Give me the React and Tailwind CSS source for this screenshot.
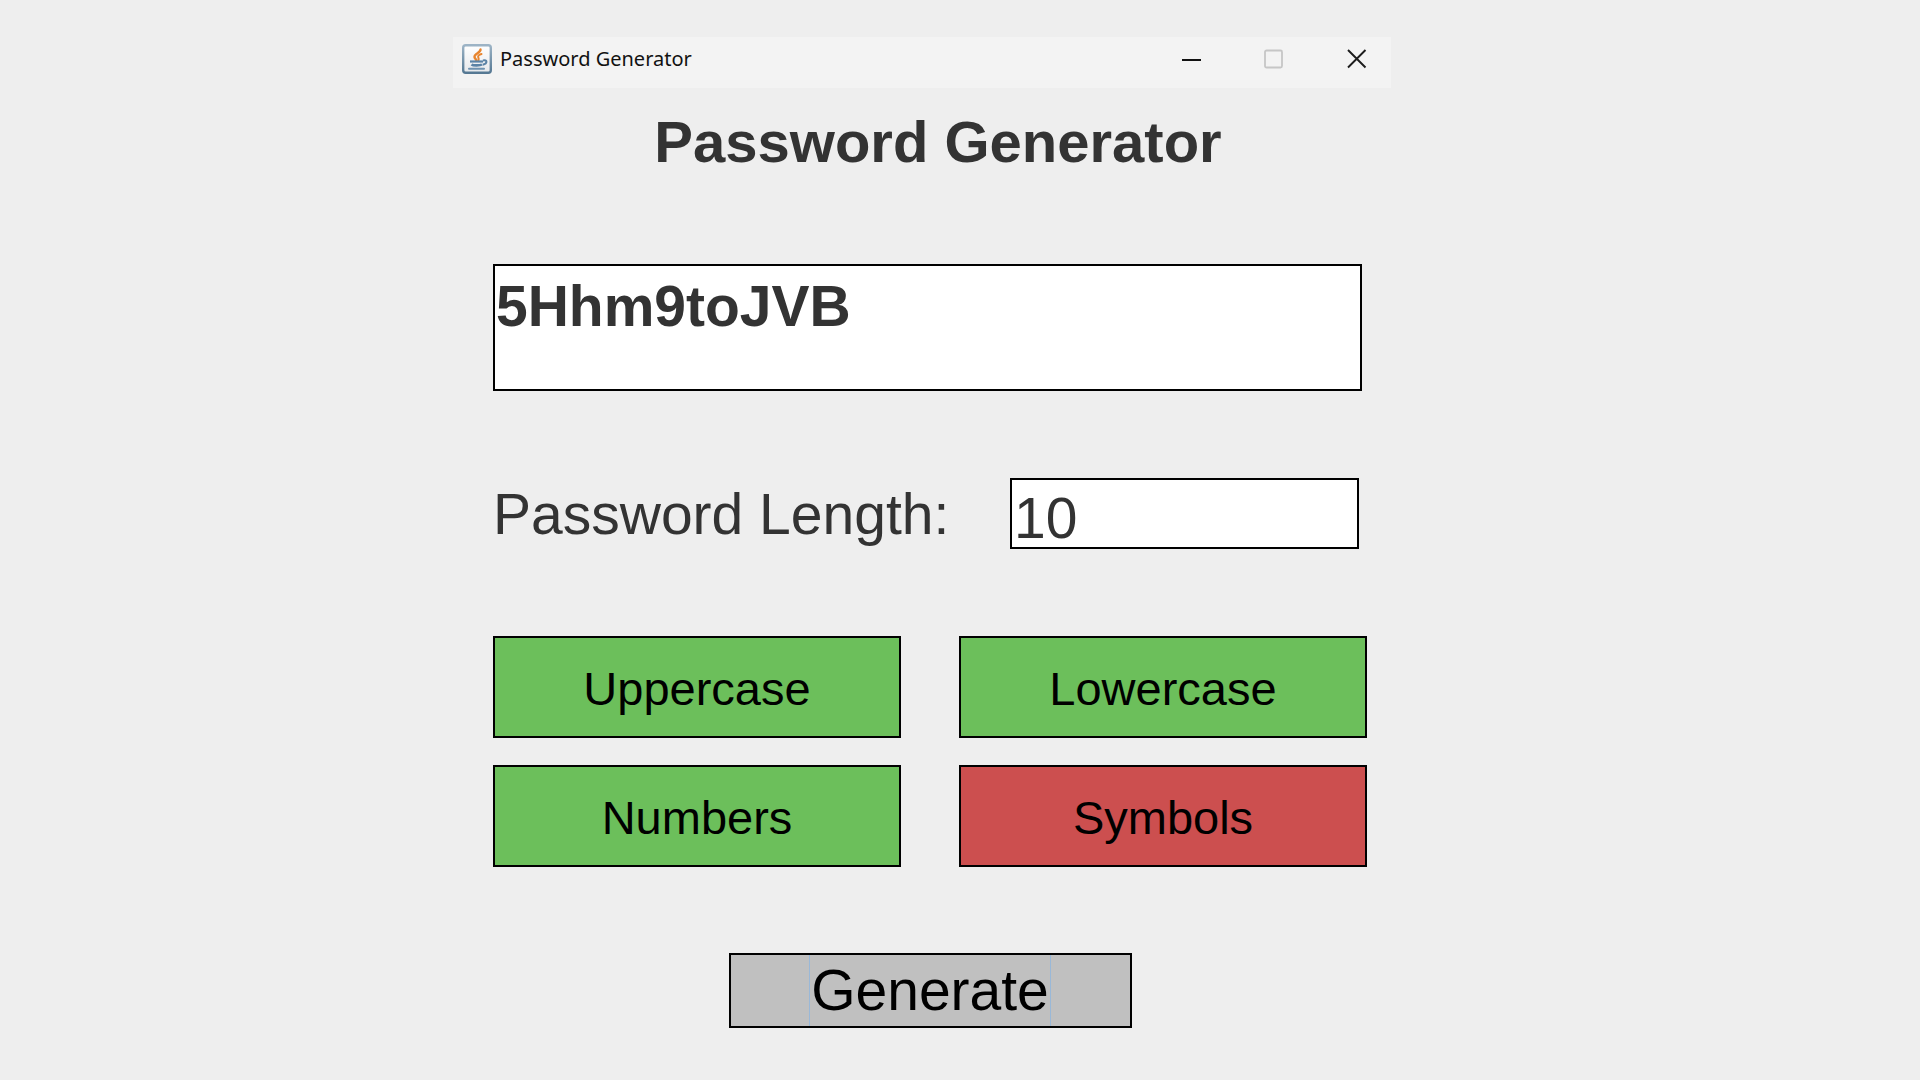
import { useState } from 'react';

function JavaIcon() {
  return (
    <svg className="h-[30px] w-[30px] shrink-0" viewBox="0 0 30 30" fill="none" aria-hidden="true">
      <defs>
        <linearGradient id="frame" x1="0" y1="0" x2="0" y2="1">
          <stop offset="0" stopColor="#9db4c6" />
          <stop offset="1" stopColor="#557893" />
        </linearGradient>
        <linearGradient id="face" x1="0" y1="0" x2="0" y2="1">
          <stop offset="0" stopColor="#ffffff" />
          <stop offset="1" stopColor="#e6e8eb" />
        </linearGradient>
      </defs>
      <rect x="1.200" y="1.200" width="27.600" height="27.600" rx="2.500" fill="url(#face)" stroke="url(#frame)" strokeWidth="2.400" />
      <path d="M18.500 5.500c.3 3.200-6.500 4.200-6 7.500.2 1.500 1.500 2.200 2 3.500" stroke="#e8852f" strokeWidth="2.400" strokeLinecap="round" />
      <path d="M19.500 10c-2.500.8-3.800 1.800-3.300 3.300.3 1 .9 1.500.3 2.700" stroke="#e8852f" strokeWidth="2" strokeLinecap="round" />
      <path d="M8 17.500h13" stroke="#5b83a6" strokeWidth="2.200" />
      <path d="M9.500 20.500c1.500 1.200 8.500 1.200 10.500 0" stroke="#5b83a6" strokeWidth="2.600" />
      <path d="M21 16.500c4.500-1.200 4.800 2.800-.3 4.200" stroke="#5b83a6" strokeWidth="2" />
      <path d="M7 24.800h15" stroke="#6f92b0" strokeWidth="2" strokeLinecap="round" />
    </svg>
  );
}

function TitleBar() {
  return (
    <header className="flex items-center bg-[#f3f3f3] pt-1.5 pr-6 pb-[13px] pl-[9px]">
      <JavaIcon />
      <span className="ml-2 font-['Noto_Sans',sans-serif] text-[20px] leading-8 text-[#111111]">
        Password Generator
      </span>
      <div className="ml-auto flex gap-[63px]">
        <button type="button" aria-label="Minimize" className="h-5 w-5">
          <svg viewBox="0 0 20 20" className="h-5 w-5" aria-hidden="true">
            <path d="M1 11h19" stroke="#111111" strokeWidth="2" />
          </svg>
        </button>
        <button type="button" aria-label="Maximize" disabled className="h-5 w-5">
          <svg viewBox="0 0 20 20" className="h-5 w-5" fill="none" aria-hidden="true">
            <rect x="1" y="1.500" width="17" height="17" rx="1.500" stroke="#c6c6c6" strokeWidth="1.800" />
          </svg>
        </button>
        <button type="button" aria-label="Close" className="h-5 w-5">
          <svg viewBox="0 0 20 20" className="h-5 w-5" aria-hidden="true">
            <path d="M1 1 18.500 18.500M18.500 1 1 18.500" stroke="#1c1c1c" strokeWidth="1.900" />
          </svg>
        </button>
      </div>
    </header>
  );
}

function ToggleButton({ label, on, onClick }) {
  return (
    <button
      type="button"
      aria-pressed={on}
      onClick={onClick}
      className={`border-2 border-black pt-[21px] pb-[17px] text-[47px] leading-[60px] text-black ${
        on ? 'bg-[#6cbf5b]' : 'bg-[#cc4f4f]'
      }`}
    >
      {label}
    </button>
  );
}

const SETS = {
  Uppercase: 'ABCDEFGHIJKLMNOPQRSTUVWXYZ',
  Lowercase: 'abcdefghijklmnopqrstuvwxyz',
  Numbers: '0123456789',
  Symbols: '!@#$%^&*()-_=+[]{};:,.<>/?',
};

export default function App() {
  const [password, setPassword] = useState('5Hhm9toJVB');
  const [length, setLength] = useState('10');
  const [enabled, setEnabled] = useState({ Uppercase: true, Lowercase: true, Numbers: true, Symbols: false });

  const generate = () => {
    const pool = Object.keys(SETS).filter((k) => enabled[k]).map((k) => SETS[k]).join('');
    const count = parseInt(length, 10);
    if (!pool || !(count > 0)) return;
    setPassword(Array.from({ length: count }, () => pool[Math.floor(Math.random() * pool.length)]).join(''));
  };

  return (
    <div className="min-h-screen bg-[#eeeeee] pt-[37px] pr-[76px] pb-12 font-['Liberation_Sans',Arial,sans-serif] text-[#333333]">
      <div className="mx-auto max-w-[938px]">
        <TitleBar />
        <main className="flex flex-col pr-6 pl-10">
          <h1 className="mt-[22px] pl-4 text-center text-[58px] leading-[64px] font-bold">Password Generator</h1>
          <textarea
            aria-label="Generated password"
            readOnly
            rows={1}
            value={password}
            className="mt-[90px] mr-[5px] h-[127px] resize-none overflow-hidden border-2 border-black bg-white pt-2 pl-px text-[57px] leading-[64px] font-bold"
          />
          <div className="mt-[87px] mr-2 flex items-center justify-between">
            <label htmlFor="length" className="text-[57px] leading-[64px] whitespace-nowrap">
              Password Length:
            </label>
            <input
              id="length"
              type="text"
              inputMode="numeric"
              value={length}
              onChange={(e) => setLength(e.target.value)}
              className="h-[71px] w-[349px] border-2 border-black bg-white pt-2 pl-0.5 text-[57px] leading-[56px]"
            />
          </div>
          <div className="mt-[87px] grid grid-cols-2 gap-x-[58px] gap-y-[27px]">
            {Object.keys(SETS).map((k) => (
              <ToggleButton
                key={k}
                label={k}
                on={enabled[k]}
                onClick={() => setEnabled({ ...enabled, [k]: !enabled[k] })}
              />
            ))}
          </div>
          <button
            type="button"
            onClick={generate}
            className="mt-[86px] flex w-[403px] justify-center self-center border-2 border-black bg-[#c0c0c0] text-[57px] leading-[71px] text-black"
          >
            <span className="border-x border-[#99b8d8] px-px">Generate</span>
          </button>
        </main>
      </div>
    </div>
  );
}
